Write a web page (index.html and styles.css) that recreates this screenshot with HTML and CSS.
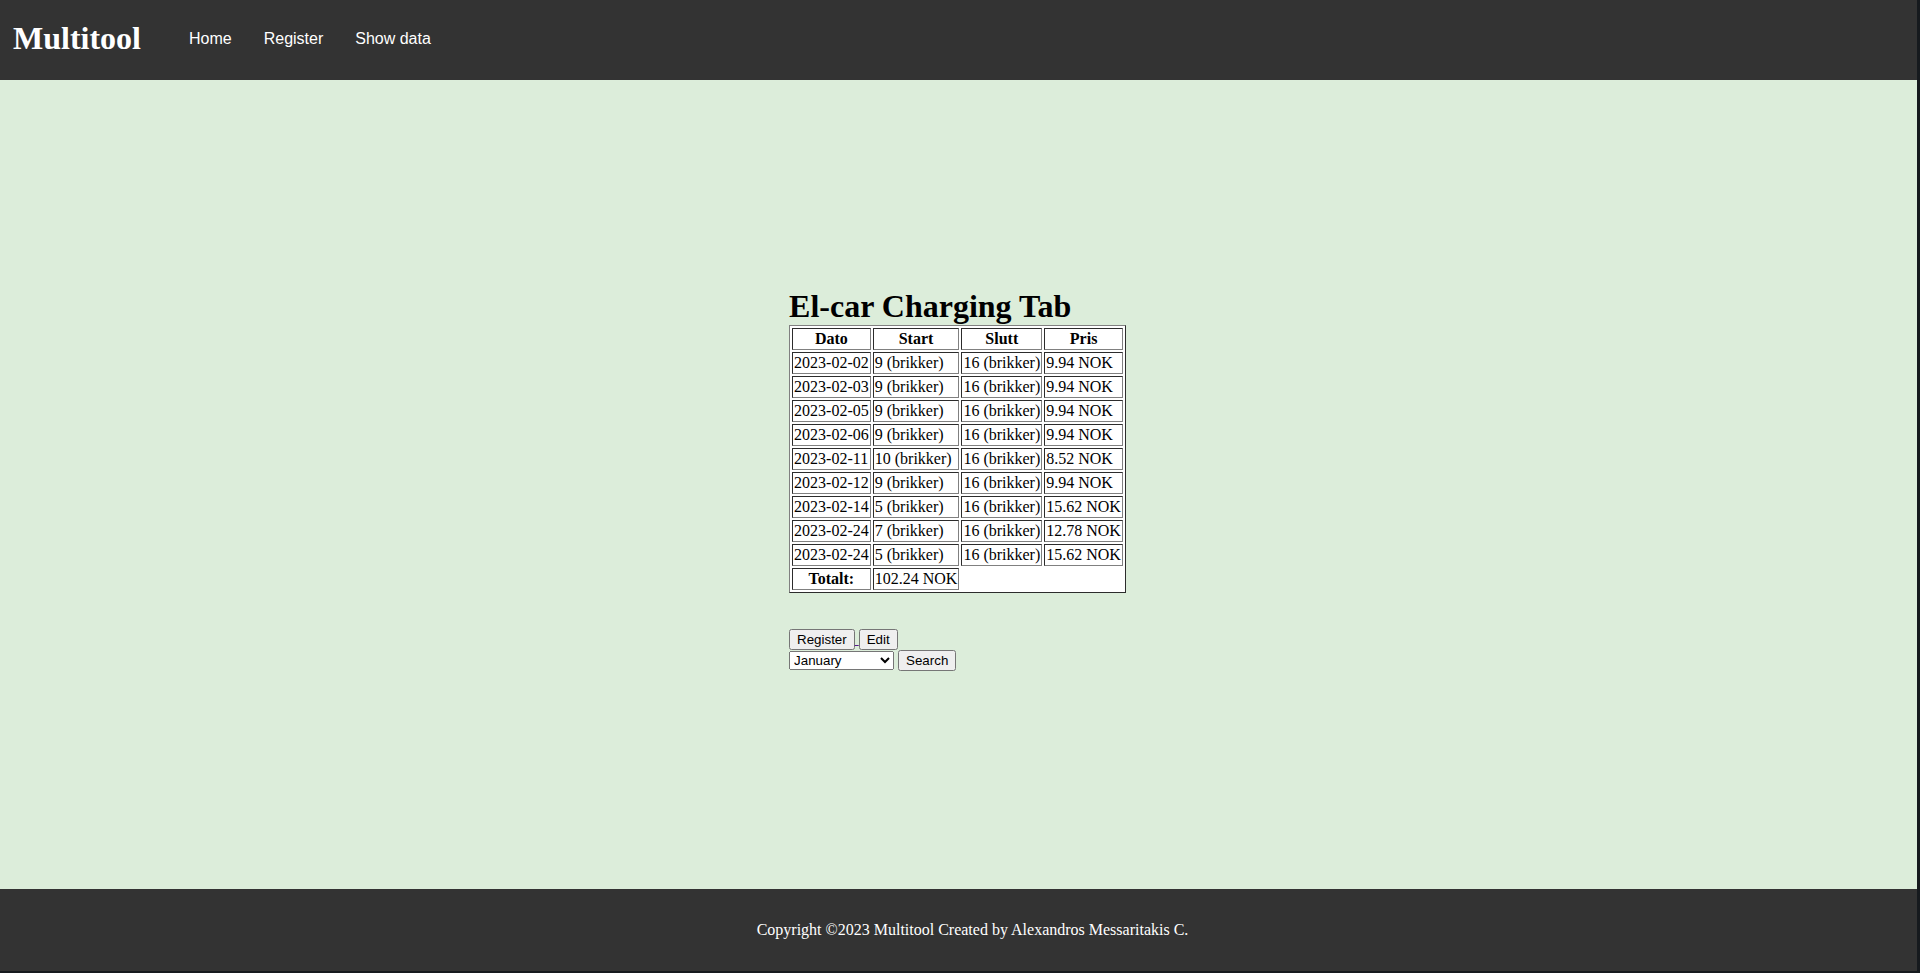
FILE: index.html
```html
<!DOCTYPE html>
<html lang="en">
<head>
<meta charset="utf-8">
<title>Multitool</title>
<link rel="stylesheet" href="styles.css">
</head>
<body>
<div class="page">
  <header class="topbar">
    <div class="logo">Multitool</div>
    <nav class="nav">
      <a href="#">Home</a>
      <a href="#">Register</a>
      <a href="#">Show data</a>
    </nav>
  </header>
  <main class="main">
    <div class="content">
      <h1 class="title">El-car Charging Tab</h1>
      <table class="tab">
        <tr><th>Dato</th><th>Start</th><th>Slutt</th><th>Pris</th></tr>
        <tr><td>2023-02-02</td><td>9 (brikker)</td><td>16 (brikker)</td><td>9.94 NOK</td></tr>
        <tr><td>2023-02-03</td><td>9 (brikker)</td><td>16 (brikker)</td><td>9.94 NOK</td></tr>
        <tr><td>2023-02-05</td><td>9 (brikker)</td><td>16 (brikker)</td><td>9.94 NOK</td></tr>
        <tr><td>2023-02-06</td><td>9 (brikker)</td><td>16 (brikker)</td><td>9.94 NOK</td></tr>
        <tr><td>2023-02-11</td><td>10 (brikker)</td><td>16 (brikker)</td><td>8.52 NOK</td></tr>
        <tr><td>2023-02-12</td><td>9 (brikker)</td><td>16 (brikker)</td><td>9.94 NOK</td></tr>
        <tr><td>2023-02-14</td><td>5 (brikker)</td><td>16 (brikker)</td><td>15.62 NOK</td></tr>
        <tr><td>2023-02-24</td><td>7 (brikker)</td><td>16 (brikker)</td><td>12.78 NOK</td></tr>
        <tr><td>2023-02-24</td><td>5 (brikker)</td><td>16 (brikker)</td><td>15.62 NOK</td></tr>
        <tr><th>Totalt:</th><td>102.24 NOK</td></tr>
      </table>
      <div class="actions">
        <div class="row"><a class="lnk" href="#"><button type="button">Register</button> </a><a class="lnk" href="#"><button type="button">Edit</button></a></div>
        <div class="row"><select class="month">
          <option>January</option><option>February</option><option>March</option><option>April</option>
          <option>May</option><option>June</option><option>July</option><option>August</option>
          <option>September</option><option>October</option><option>November</option><option>December</option>
        </select> <button type="button">Search</button></div>
      </div>
    </div>
  </main>
  <footer class="footer">
    <p>Copyright ©2023 Multitool Created by Alexandros Messaritakis C.</p>
  </footer>
</div>
</body>
</html>
```

FILE: styles.css
```css
html {
  background: #161a1e;
}
body {
  margin: 0;
  font-family: "Liberation Serif", "Times New Roman", serif;
  font-size: 16px;
  color: #000;
}
.page {
  width: calc(100% - 3px);
  height: 971px;
  display: flex;
  flex-direction: column;
}
.topbar {
  height: 80px;
  box-sizing: border-box;
  background: #333333;
  display: flex;
  align-items: center;
  padding: 0 12px 3px 13px;
  flex: none;
}
.logo {
  color: #fff;
  font-weight: bold;
  font-size: 32px;
}
.nav {
  display: flex;
  gap: 32px;
  margin-left: 48px;
}
.nav a {
  color: #fff;
  text-decoration: none;
  font-family: "Liberation Sans", Arial, sans-serif;
  font-size: 16px;
}
.main {
  flex: 1;
  background: #dcedda;
  display: flex;
  justify-content: center;
  align-items: center;
  padding-bottom: 11px;
  padding-right: 2px;
}
.content {
  display: flex;
  flex-direction: column;
  align-items: flex-start;
}
.title {
  margin: 0;
  font-size: 32px;
  font-weight: bold;
}
.tab {
  background: #fff;
  border: 1px outset #808080;
  border-spacing: 2px;
}
.tab th,
.tab td {
  border: 1px inset #808080;
  padding: 1px;
}
.tab td {
  text-align: left;
}
.actions {
  margin-top: 36px;
}
.row {
  line-height: 20px;
}
.lnk {
  color: #551a8b;
}
button,
select {
  font-family: "Liberation Sans", Arial, sans-serif;
  font-size: 13.333px;
}
.month {
  width: 105px;
}
.footer {
  height: 82px;
  flex: none;
  background: #333333;
  color: #fff;
  display: flex;
  align-items: center;
  justify-content: center;
  padding-left: 28px;
}
.footer p {
  margin: 0;
}
```
